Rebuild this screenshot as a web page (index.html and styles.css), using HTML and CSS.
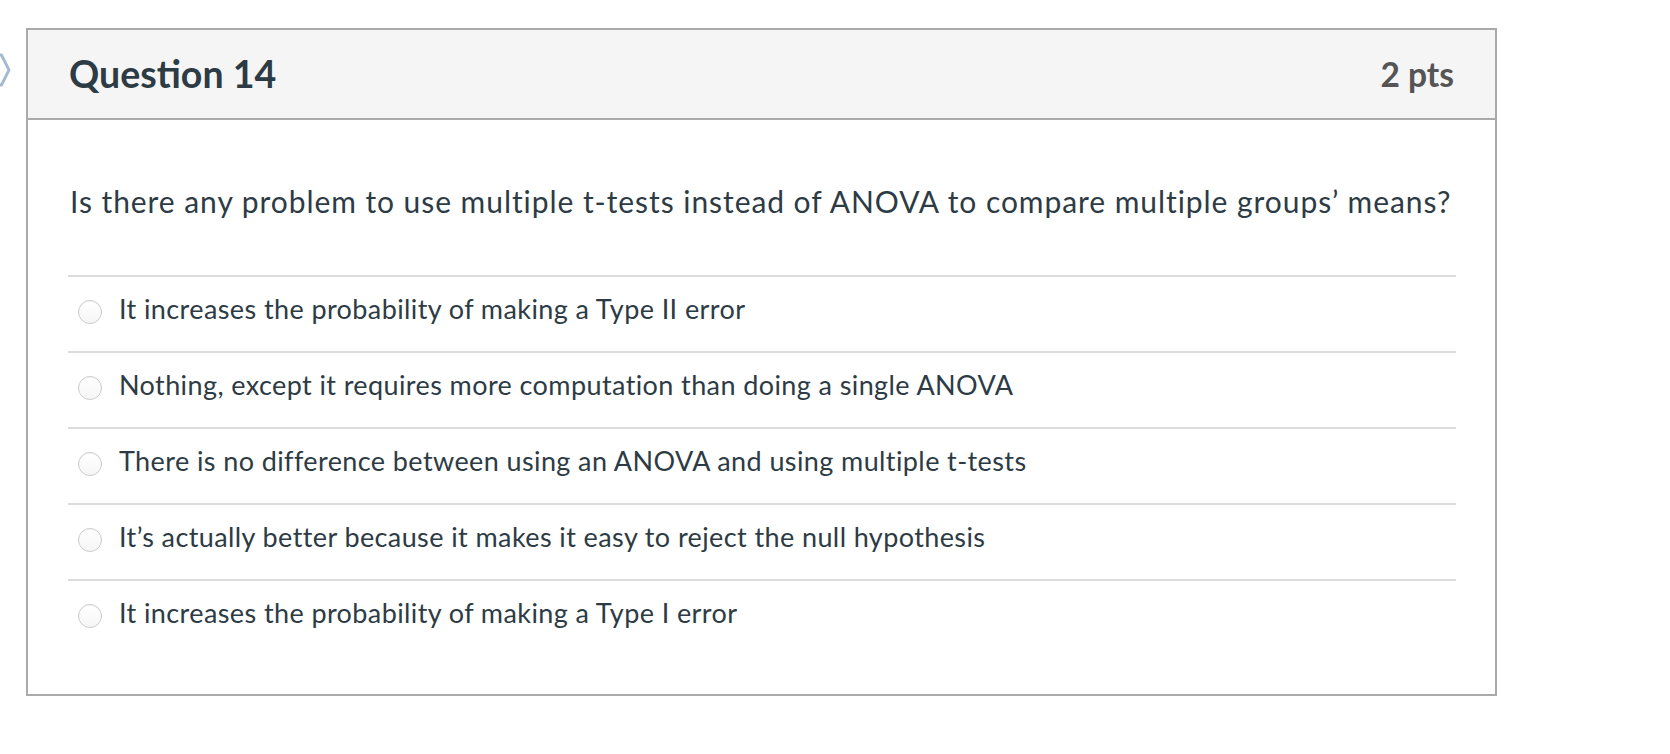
FILE: index.html
```html
<!DOCTYPE html>
<html lang="en">
<head>
<meta charset="utf-8">
<title>Question 14</title>
<link rel="stylesheet" href="styles.css">
</head>
<body>
<svg class="flag" width="14" height="34" viewBox="0 0 14 34" aria-hidden="true">
  <path d="M-20 2 L1.5 2 L9 17 L1.5 32 L-20 32 Z" fill="none" stroke="#a3bad0" stroke-width="2.8" stroke-linejoin="round"/>
</svg>
<div class="card">
  <div class="card-header">
    <h2 class="q-title">Question 14</h2>
    <span class="q-points">2 pts</span>
  </div>
  <div class="card-body">
    <p class="q-text">Is there any problem to use multiple t-tests instead of ANOVA to compare multiple groups’ means?</p>
    <ul class="answers">
      <li class="answer"><span class="radio"></span><span class="answer-text">It increases the probability of making a Type II error</span></li>
      <li class="answer"><span class="radio"></span><span class="answer-text">Nothing, except it requires more computation than doing a single ANOVA</span></li>
      <li class="answer"><span class="radio"></span><span class="answer-text">There is no difference between using an ANOVA and using multiple t-tests</span></li>
      <li class="answer"><span class="radio"></span><span class="answer-text">It’s actually better because it makes it easy to reject the null hypothesis</span></li>
      <li class="answer"><span class="radio"></span><span class="answer-text">It increases the probability of making a Type I error</span></li>
    </ul>
  </div>
</div>
</body>
</html>
```

FILE: styles.css
```css
* { box-sizing: border-box; }

html, body {
  margin: 0;
  background: #ffffff;
}

body {
  padding: 28px 0 0 26px;
  font-family: Lato, "Open Sans", "Liberation Sans", sans-serif;
  color: #2d3b45;
}

.flag {
  position: absolute;
  left: 0;
  top: 53px;
}

.card {
  width: 1471px;
  border: 2px solid #aaaaaa;
  background: #ffffff;
}

.card-header {
  display: flex;
  justify-content: space-between;
  align-items: center;
  height: 90px;
  padding: 0 41px 0 41px;
  background: #f5f5f5;
  border-bottom: 2px solid #aaaaaa;
}

.q-title {
  margin: 0;
  font-size: 37.5px;
  font-weight: 700;
  line-height: 88px;
  color: #2d3b45;
}

.q-points {
  font-size: 33.5px;
  font-weight: 700;
  line-height: 88px;
  color: #555555;
}

.card-body {
  padding: 61px 39px 39px 40px;
}

.q-text {
  margin: 0 0 54px 2px;
  font-size: 30px;
  letter-spacing: 0.94px;
  line-height: 40px;
}

.answers {
  list-style: none;
  margin: 0;
  padding: 0;
}

.answer {
  display: flex;
  align-items: flex-start;
  height: 76px;
  padding: 14px 0 0 10px;
  border-top: 2px solid #dcdcdc;
}

.radio {
  flex: none;
  width: 24px;
  height: 24px;
  margin-top: 9px;
  margin-right: 17px;
  border-radius: 50%;
  border: 1px solid #cccccc;
  background: linear-gradient(#ffffff, #f6f6f6);
  box-shadow: inset 0 1px 1px rgba(0, 0, 0, 0.04);
}

.answer-text {
  font-size: 27px;
  letter-spacing: 0.4px;
  line-height: 36px;
}
```
